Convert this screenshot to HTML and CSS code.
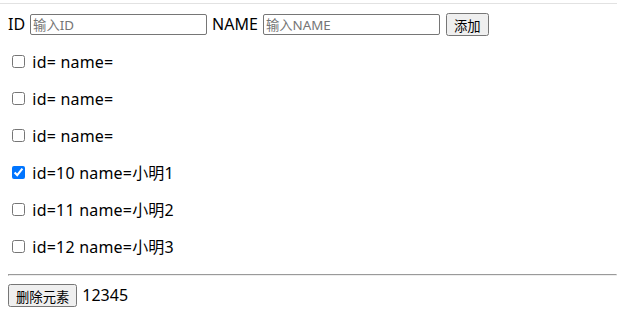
FILE: index.html
```html
<!DOCTYPE html>
<html lang="zh-CN">
<head>
  <meta charset="UTF-8">
  <meta name="viewport" content="width=device-width, initial-scale=1.0">
  <title>列表</title>
  <link rel="stylesheet" href="styles.css">
</head>
<body>

  <div class="top-line"></div>

  <div id="app">
    <div class="add-row">
      <label>ID</label>
      <input type="text" class="field" placeholder="输入ID">
      <label>NAME</label>
      <input type="text" class="field" placeholder="输入NAME">
      <button type="button">添加</button>
    </div>

    <p class="item"><input type="checkbox"> id= name=</p>
    <p class="item"><input type="checkbox"> id= name=</p>
    <p class="item"><input type="checkbox"> id= name=</p>
    <p class="item"><input type="checkbox" checked> id=10 name=小明1</p>
    <p class="item"><input type="checkbox"> id=11 name=小明2</p>
    <p class="item"><input type="checkbox"> id=12 name=小明3</p>

    <hr>

    <div class="bottom-row">
      <button type="button">删除元素</button>
      <span>12345</span>
    </div>
  </div>

</body>
</html>
```

FILE: styles.css
```css
body {
  margin: 0;
  font-family: 'Noto Sans', 'Noto Sans CJK SC', sans-serif;
  font-size: 16px;
  line-height: 21px;
  color: #000;
  background-color: #fff;
}

.top-line {
  height: 3px;
  border-bottom: 1px solid #e2e2e2;
}

#app {
  padding: 9px 0 8px 8px;
}

.add-row {
  height: 23px;
  display: flex;
  align-items: center;
  gap: 5px;
}

.field {
  box-sizing: border-box;
  width: 177px;
  height: 21px;
  margin: 0;
  padding: 1px 2px;
  border: 1px solid #767676;
  border-radius: 2px;
  font-family: 'Noto Sans', 'Noto Sans CJK SC', sans-serif;
  font-size: 13.33px;
}

.field::placeholder {
  color: #757575;
}

.add-row button {
  margin-left: 1px;
}

button {
  height: 23px;
  margin: 0;
  padding: 1px 6px;
  font-family: 'Noto Sans', 'Noto Sans CJK SC', sans-serif;
  font-size: 13.33px;
}

.item {
  margin: 16px 0;
  letter-spacing: 0.2px;
}

hr {
  margin: 8px 0;
}

.bottom-row {
  display: flex;
  align-items: center;
  gap: 5px;
}
```
